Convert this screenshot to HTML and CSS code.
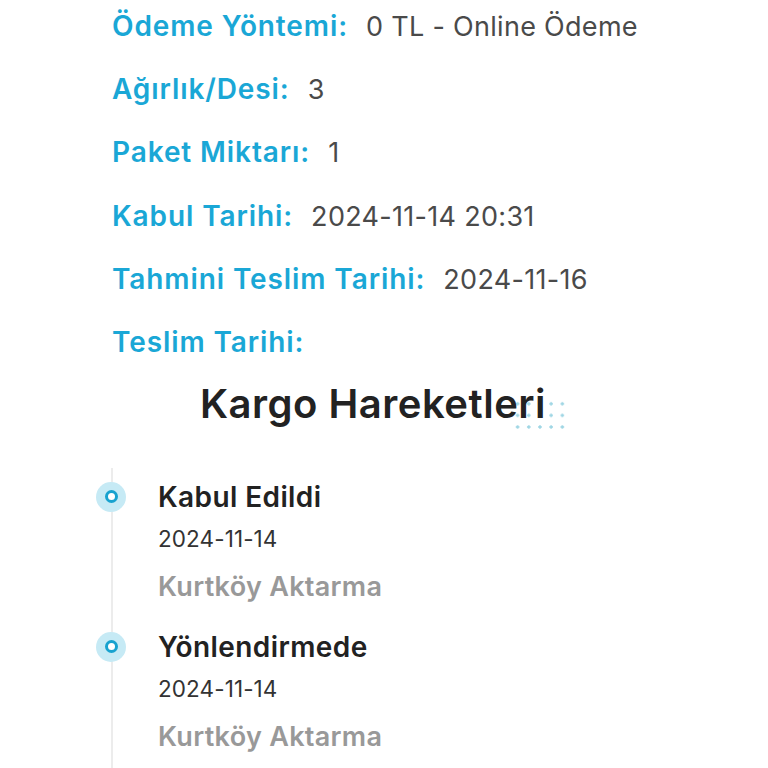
FILE: index.html
```html
<!DOCTYPE html>
<html lang="tr">
<head>
<meta charset="utf-8">
<link rel="stylesheet" href="styles.css">
</head>
<body>
<div class="page">
  <div class="details">
    <div class="row"><span class="label">Ödeme Yöntemi:</span><span class="value">0 TL - Online Ödeme</span></div>
    <div class="row"><span class="label">Ağırlık/Desi:</span><span class="value">3</span></div>
    <div class="row"><span class="label">Paket Miktarı:</span><span class="value">1</span></div>
    <div class="row"><span class="label">Kabul Tarihi:</span><span class="value">2024-11-14 20:31</span></div>
    <div class="row"><span class="label">Tahmini Teslim Tarihi:</span><span class="value">2024-11-16</span></div>
    <div class="row"><span class="label">Teslim Tarihi:</span><span class="value"></span></div>
  </div>
  <div class="title-wrap">
    <h2 class="title"><span class="dots"></span><span class="title-text">Kargo Hareketleri</span></h2>
  </div>
  <div class="timeline">
    <div class="item">
      <span class="marker"></span>
      <div class="item-title">Kabul Edildi</div>
      <div class="item-date">2024-11-14</div>
      <div class="item-loc">Kurtköy Aktarma</div>
    </div>
    <div class="item">
      <span class="marker"></span>
      <div class="item-title">Yönlendirmede</div>
      <div class="item-date">2024-11-14</div>
      <div class="item-loc">Kurtköy Aktarma</div>
    </div>
  </div>
</div>
</body>
</html>
```
FILE: styles.css
```css
html, body {
  margin: 0;
  padding: 0;
  background: #ffffff;
  overflow: hidden;
}
body {
  font-family: "Inter", "Noto Sans", sans-serif;
  color: #333;
}
.page {
  width: 768px;
  height: 768px;
}
.details {
  display: flex;
  flex-direction: column;
  gap: 23.2px;
  padding: 6px 0 0 112px;
}
.row {
  display: flex;
  align-items: baseline;
  gap: 18px;
  line-height: 40px;
  height: 40px;
}
.label {
  color: #1aa7d6;
  font-size: 28px;
  font-weight: 600;
  letter-spacing: 0.9px;
}
.value {
  color: #4a4a4a;
  font-size: 27px;
  font-weight: 400;
  letter-spacing: 0.3px;
}
.title-wrap {
  display: flex;
  justify-content: center;
  padding: 17px 22px 0 0;
}
.title {
  position: relative;
  isolation: isolate;
  margin: 0;
  font-size: 40px;
  line-height: 50px;
  font-weight: 600;
  letter-spacing: 0.5px;
  color: #222;
}
.title-text {
  position: relative;
  z-index: 1;
}
.dots {
  position: absolute;
  left: 312px;
  top: 19px;
  width: 56px;
  height: 35px;
  z-index: 0;
  background-image: radial-gradient(circle, #9fd6e4 1.4px, rgba(255,255,255,0) 1.8px);
  background-size: 11.2px 11.6px;
  background-position: 0 0;
}
.timeline {
  margin: 39px 0 0 111px;
  border-left: 2px solid #ececec;
  padding: 14px 0 40px 45px;
  display: flex;
  flex-direction: column;
  gap: 30px;
}
.item {
  position: relative;
}
.marker {
  position: absolute;
  left: -62px;
  top: 0;
  width: 30px;
  height: 30px;
  border-radius: 50%;
  background: #c6eaf5;
  display: flex;
  align-items: center;
  justify-content: center;
}
.marker::after {
  content: "";
  width: 7px;
  height: 7px;
  border-radius: 50%;
  border: 3px solid #17a2cf;
  background: #fff;
}
.item-title {
  font-size: 28px;
  line-height: 30px;
  font-weight: 600;
  letter-spacing: 0.4px;
  color: #222;
}
.item-date {
  margin-top: 12px;
  font-size: 22.5px;
  line-height: 30px;
  letter-spacing: 0.1px;
  color: #333;
}
.item-loc {
  margin-top: 18px;
  font-size: 27px;
  line-height: 30px;
  font-weight: 600;
  letter-spacing: 0.3px;
  color: #999;
}
```
